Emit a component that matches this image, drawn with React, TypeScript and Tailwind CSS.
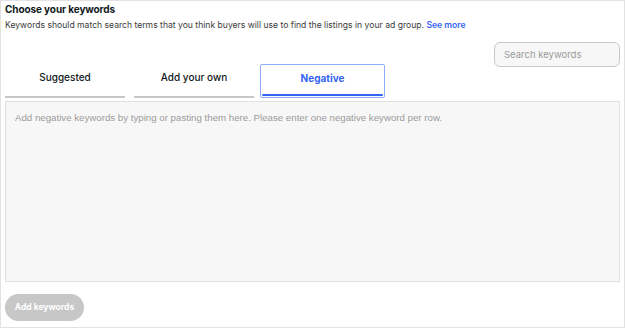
export default function App() {
  const tabs = ["Suggested", "Add your own", "Negative"];
  const active = "Negative";

  return (
    <div className="h-[328px] w-[625px] border border-[#e2e2e2] bg-white px-[4px] font-['Inter',sans-serif] text-[#111820]">
      <div className="pt-[1px]">
        <h2 className="text-[10px] font-bold leading-[14px] tracking-[-0.1px]">Choose your keywords</h2>
        <p className="mt-[3px] text-[8.6px] leading-[12px] text-[#3a3a3a]">
          Keywords should match search terms that you think buyers will use to find the listings in your ad group.{" "}
          <a className="font-semibold text-[#3665f3]">See more</a>
        </p>
      </div>

      <div className="mt-[11px] flex justify-end">
        <input
          placeholder="Search keywords"
          className="h-[25px] w-[126px] rounded-[6px] border border-[#c9c9c9] bg-[#f7f7f7] px-[9px] text-[9.5px] text-[#111820] outline-none placeholder:text-[#9a9a9a]"
        />
      </div>

      <div className="-mt-[3px] flex gap-[9px]">
        {tabs.map((tab) => {
          const on = tab === active;
          return (
            <button
              key={tab}
              type="button"
              className={`flex h-[34px] flex-col items-center justify-end ${
                on
                  ? "-ml-[3px] w-[125px] rounded-[2px] border-[1.5px] border-[#8fabfb] px-[1px] pb-[1px]"
                  : "w-[120px]"
              }`}
            >
              <span
                className={`flex-1 pt-[4px] text-[10px] leading-[18px] ${
                  on ? "font-bold text-[#3665f3]" : "font-medium text-[#111820]"
                }`}
              >
                {tab}
              </span>
              <span className={`block h-[2px] w-full ${on ? "rounded-full bg-[#3665f3]" : "bg-[#c7c7c7]"}`} />
            </button>
          );
        })}
      </div>

      <div className="mt-[3px] h-[181px] border border-[#e0e0e0] bg-[#f7f7f7] px-[9px] pt-[9px]">
        <p className="font-['Liberation_Sans',sans-serif] text-[9.7px] text-[#9b9b9b]">
          Add negative keywords by typing or pasting them here. Please enter one negative keyword per row.
        </p>
      </div>

      <button
        type="button"
        disabled
        className="mt-[12px] h-[27px] w-[79px] rounded-full bg-[#c7c7c7] text-[8.5px] font-bold text-white"
      >
        Add keywords
      </button>
    </div>
  );
}
